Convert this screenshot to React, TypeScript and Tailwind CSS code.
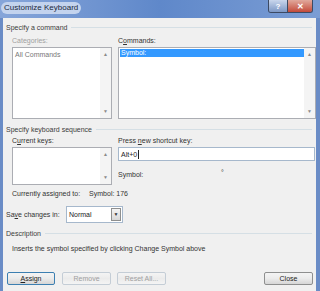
import React from 'react'

const font = { fontFamily: '"Liberation Sans", Arial, sans-serif' }

function Header({ text }: { text: string }) {
  return (
    <div className="flex h-[10px] items-center gap-[4px] pr-[4px]">
      <span className="text-[#3c3c3c]">{text}</span>
      <div className="h-px flex-1 bg-[#d5dfe5]" />
    </div>
  )
}

function Scroll() {
  return (
    <div className="flex w-[11px] flex-col items-center justify-between bg-[#f4f4f4] py-[4px] text-[5px] leading-none text-[#8a8a8a]">
      <span>▲</span>
      <span>▼</span>
    </div>
  )
}

function Btn({ children, def, disabled, w }: { children: React.ReactNode; def?: boolean; disabled?: boolean; w: string }) {
  return (
    <div
      className={`${w} flex h-[13px] items-center justify-center rounded-[2px] border bg-gradient-to-b from-[#f4f4f4] via-[#ebebeb] to-[#d6d6d6] ${
        def ? 'border-[#3c7fb1] text-[#222]' : disabled ? 'border-[#c4cdd6] from-[#f4f4f4] to-[#f4f4f4] text-[#a0a0a0]' : 'border-[#8e8f8f] text-[#222]'
      }`}
    >
      {children}
    </div>
  )
}

export default function App() {
  return (
    <div className="flex h-[291px] w-[320px] flex-col overflow-hidden bg-[#6a8cc6] text-[7px] leading-[9px]" style={font}>
      {/* title bar */}
      <div className="flex h-[18px] items-start bg-gradient-to-r from-[#86a5d9] via-[#5f88ca] to-[#7b9dd4]">
        <div className="ml-[1px] mt-[2px] rounded-full bg-[#c3d3ee] px-[3px] py-[1px] text-[8px] leading-[10px] text-[#1c2a3c]">
          Customize Keyboard
        </div>
        <div className="flex-1" />
        <div className="mr-[7px] flex h-[13px] overflow-hidden rounded-b-[3px] border border-t-0 border-[#3c4a63]">
          <div className="flex w-[18px] items-center justify-center bg-gradient-to-b from-[#c9d6ec] to-[#7d98c5] text-[8px] font-bold text-white">?</div>
          <div className="flex w-[25px] items-center justify-center border-l border-[#3c4a63] bg-gradient-to-b from-[#e0a89c] to-[#c2493a] text-[8px] font-bold text-white">✕</div>
        </div>
      </div>

      {/* body */}
      <div className="ml-[3px] mr-[4px] flex-1 bg-[#f0f0f0] pl-[3px] pt-[4px] text-[#333]">
        <Header text="Specify a command" />
        <div className="ml-[6px] mt-[4px] flex gap-[6px]">
          <div className="flex w-[100px] flex-col">
            <span className="h-[9px] text-[#a0a0a0]">Categories:</span>
            <div className="mt-[2px] flex h-[72px] border border-[#abadb3] bg-white">
              <div className="flex-1 pl-[2px] pt-[2px] text-[#777]">All Commands</div>
              <Scroll />
            </div>
          </div>
          <div className="flex w-[198px] flex-col">
            <span className="h-[9px]">
              C<u>o</u>mmands:
            </span>
            <div className="mt-[2px] flex h-[72px] border border-[#abadb3] bg-white">
              <div className="flex-1 pl-[1px] pt-[1px]">
                <div className="h-[8px] bg-[#3399ff] pl-[1px] leading-[8px] text-white">Symbol:</div>
              </div>
              <Scroll />
            </div>
          </div>
        </div>

        <div className="mt-[5px]">
          <Header text="Specify keyboard sequence" />
        </div>
        <div className="ml-[6px] mt-[2px] flex gap-[6px]">
          <div className="flex w-[100px] flex-col">
            <span className="h-[9px]">
              C<u>u</u>rrent keys:
            </span>
            <div className="mt-[2px] flex h-[38px] border border-[#abadb3] bg-white">
              <div className="flex-1" />
              <Scroll />
            </div>
          </div>
          <div className="flex w-[197px] flex-col">
            <span className="h-[9px]">
              Press <u>n</u>ew shortcut key:
            </span>
            <div className="mt-[2px] flex h-[14px] items-center border border-[#a6b8cc] bg-white pl-[2px] text-[#222]">
              Alt+0<span className="ml-px h-[9px] w-px bg-[#222]" />
            </div>
            <div className="mt-[9px] flex">
              <span className="w-[103px]">Symbol:</span>
              <span className="-mt-[2px]">°</span>
            </div>
          </div>
        </div>

        <div className="ml-[6px] mt-[4px] flex h-[9px] gap-[9px]">
          <span>Currently assigned to:</span>
          <span>Symbol: 176</span>
        </div>

        <div className="mt-[8px] flex h-[17px] items-center">
          <span className="w-[60px]">
            Sa<u>v</u>e changes in:
          </span>
          <div className="flex h-[17px] w-[57px] border border-[#a6b8cc] bg-white">
            <span className="flex-1 pl-[2px] pt-[3px] text-[#222]">Normal</span>
            <div className="m-px flex w-[10px] items-center justify-center border border-[#8e8f8f] bg-gradient-to-b from-[#f4f4f4] to-[#d8d8d8] text-[5px] text-[#333]">
              ▼
            </div>
          </div>
        </div>

        <div className="mt-[5px]">
          <Header text="Description" />
        </div>
        <div className="ml-[6px] mt-[6px] h-[9px]">Inserts the symbol specified by clicking Change Symbol above</div>

        <div className="ml-[1px] mt-[19px] flex items-center pr-[3px]">
          <Btn w="w-[48px]" def>
            <u>A</u>ssign
          </Btn>
          <div className="w-[7px]" />
          <Btn w="w-[49px]" disabled>
            Remove
          </Btn>
          <div className="w-[6px]" />
          <Btn w="w-[49px]" disabled>
            Reset All...
          </Btn>
          <div className="flex-1" />
          <Btn w="w-[49px]">Close</Btn>
        </div>
      </div>
    </div>
  )
}
